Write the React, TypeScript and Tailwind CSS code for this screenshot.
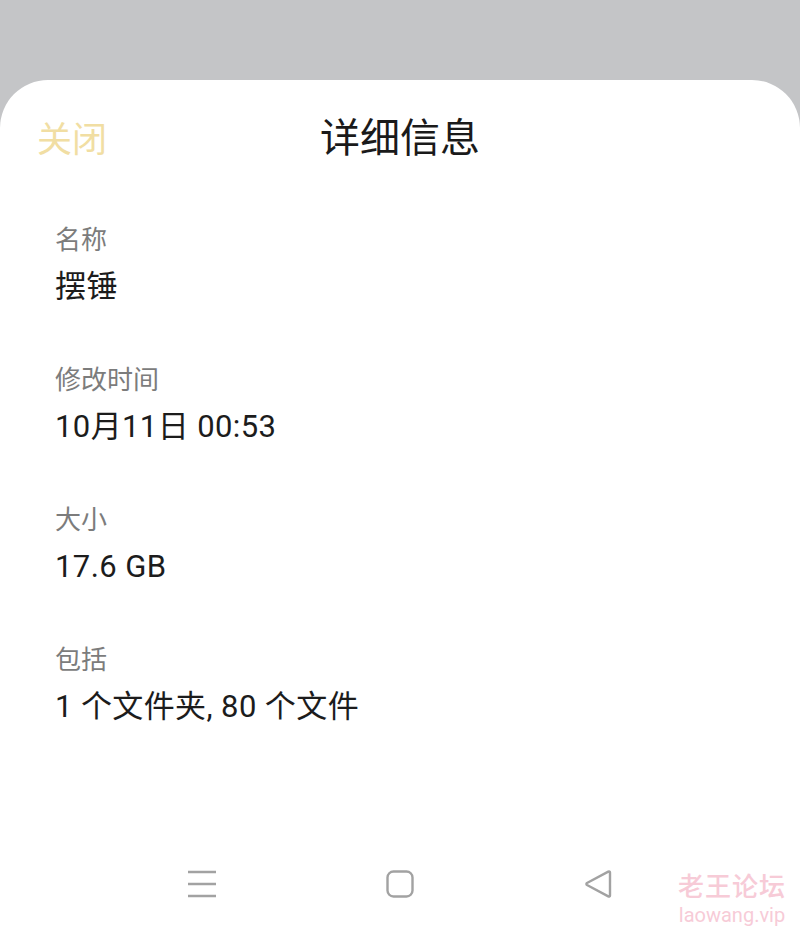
import React from "react";

const fields = [
  { label: "名称", value: "摆锤" },
  { label: "修改时间", value: "10月11日 00:53" },
  { label: "大小", value: "17.6 GB" },
  { label: "包括", value: "1 个文件夹, 80 个文件" },
];

export default function App() {
  return (
    <div className="relative flex h-[934px] w-[800px] flex-col bg-[#c4c5c7] font-['Roboto','Noto_Sans_CJK_SC',sans-serif]">
      <div className="h-[80px] shrink-0" />
      <div className="flex flex-1 flex-col rounded-t-[48px] bg-white">
        <div className="relative flex h-[118px] items-center justify-center">
          <button className="absolute left-[37px] top-[37px] text-[35px] leading-[48px] text-[#f1dea3]">关闭</button>
          <div className="text-[40px] leading-[52px] text-[#1a1a1a]">详细信息</div>
        </div>

        <div className="flex flex-col px-[55px] pt-[24px]">
          {fields.map((f) => (
            <div key={f.label} className="flex h-[140px] flex-col">
              <div className="text-[26px] leading-[36px] text-[#7c7c7c]">{f.label}</div>
              <div className="mt-[7px] text-[31px] leading-[44px] tracking-[0.4px] text-[#1c1c1c]">{f.value}</div>
            </div>
          ))}
        </div>

        <div className="mt-auto flex h-[100px] items-center justify-center">
          <div className="flex w-[198px] justify-center">
            <svg width="30" height="30" viewBox="0 0 30 30" fill="none" stroke="#a2a2a2" strokeWidth="2.4">
              <path d="M1 3h28M1 15h28M1 27h28" />
            </svg>
          </div>
          <div className="flex w-[198px] justify-center">
            <svg width="28" height="28" viewBox="0 0 28 28" fill="none" stroke="#a2a2a2" strokeWidth="2.4">
              <rect x="1.5" y="1.5" width="25" height="25" rx="6" />
            </svg>
          </div>
          <div className="flex w-[198px] justify-center">
            <svg width="30" height="28" viewBox="0 0 30 28" fill="none" stroke="#a2a2a2" strokeWidth="2.4" strokeLinejoin="round">
              <path d="M27 2.5v23c0 1-0.8 1.4-1.7 0.9L4 15c-0.8-0.5-0.8-1.5 0-2L25.3 1.6c0.9-0.5 1.7-0.1 1.7 0.9z" />
            </svg>
          </div>
        </div>
      </div>

      <div className="absolute bottom-[7px] right-[14px] flex flex-col items-center text-[#f7cbd7]">
        <div className="text-[26px] font-medium leading-[32px] tracking-[1px]">老王论坛</div>
        <div className="text-[20px] leading-[24px]">laowang.vip</div>
      </div>
    </div>
  );
}
